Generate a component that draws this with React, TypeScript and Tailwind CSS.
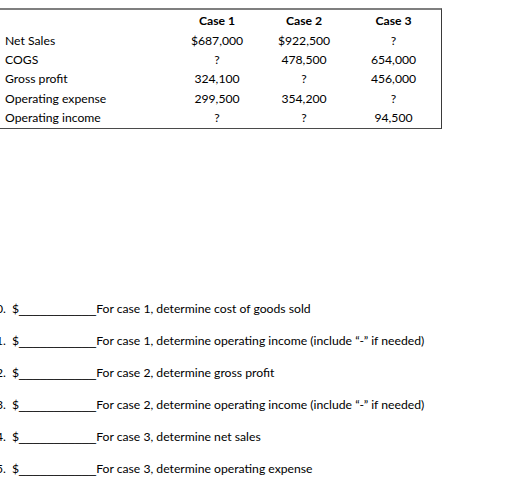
import React from "react";

const rows = [
  { label: "Net Sales", c1: "$687,000", c2: "$922,500", c3: "?" },
  { label: "COGS", c1: "?", c2: "478,500", c3: "654,000" },
  { label: "Gross profit", c1: "324,100", c2: "?", c3: "456,000" },
  { label: "Operating expense", c1: "299,500", c2: "354,200", c3: "?" },
  { label: "Operating income", c1: "?", c2: "?", c3: "94,500" },
];

const questions = [
  { n: "10.", text: "For case 1, determine cost of goods sold" },
  { n: "11.", text: "For case 1, determine operating income (include \u201c-\u201d if needed)" },
  { n: "12.", text: "For case 2, determine gross profit" },
  { n: "13.", text: "For case 2, determine operating income (include \u201c-\u201d if needed)" },
  { n: "14.", text: "For case 3, determine net sales" },
  { n: "15.", text: "For case 3, determine operating expense" },
];

const App: React.FC = () => {
  return (
    <div className="w-[511px] h-[499px] bg-white text-black overflow-hidden text-[12.2px] font-['Lato',sans-serif]">
      <div className="pt-2">
        <div className="w-[442px] border-t-2 border-t-[#7f7f7f] border-r border-r-[#3a3a3a] border-b-[1.5px] border-b-[#4a4a4a]">
          <div className="grid grid-cols-[172px_90px_84px_95px] h-[21px] items-center pt-[2px]">
            <div />
            <div className="text-center font-bold">Case 1</div>
            <div className="text-center font-bold">Case 2</div>
            <div className="text-center font-bold">Case 3</div>
          </div>
          {rows.map((r) => (
            <div key={r.label} className="grid grid-cols-[172px_90px_84px_95px] h-[19.4px] items-center">
              <div className="pl-[5px]">{r.label}</div>
              <div className="text-center">{r.c1}</div>
              <div className="text-center">{r.c2}</div>
              <div className="text-center">{r.c3}</div>
            </div>
          ))}
        </div>
      </div>
      <div className="mt-[164px] flex flex-col">
        {questions.map((q) => (
          <div key={q.n} className="flex items-center h-[32px] whitespace-nowrap">
            <div className="w-[6px] flex justify-end">
              <span>{q.n}</span>
            </div>
            <span className="ml-[6px]">$</span>
            <span className="font-['Liberation_Sans',sans-serif] text-[12.6px]">___________</span>
            <span>{q.text}</span>
          </div>
        ))}
      </div>
    </div>
  );
};

export default App;
